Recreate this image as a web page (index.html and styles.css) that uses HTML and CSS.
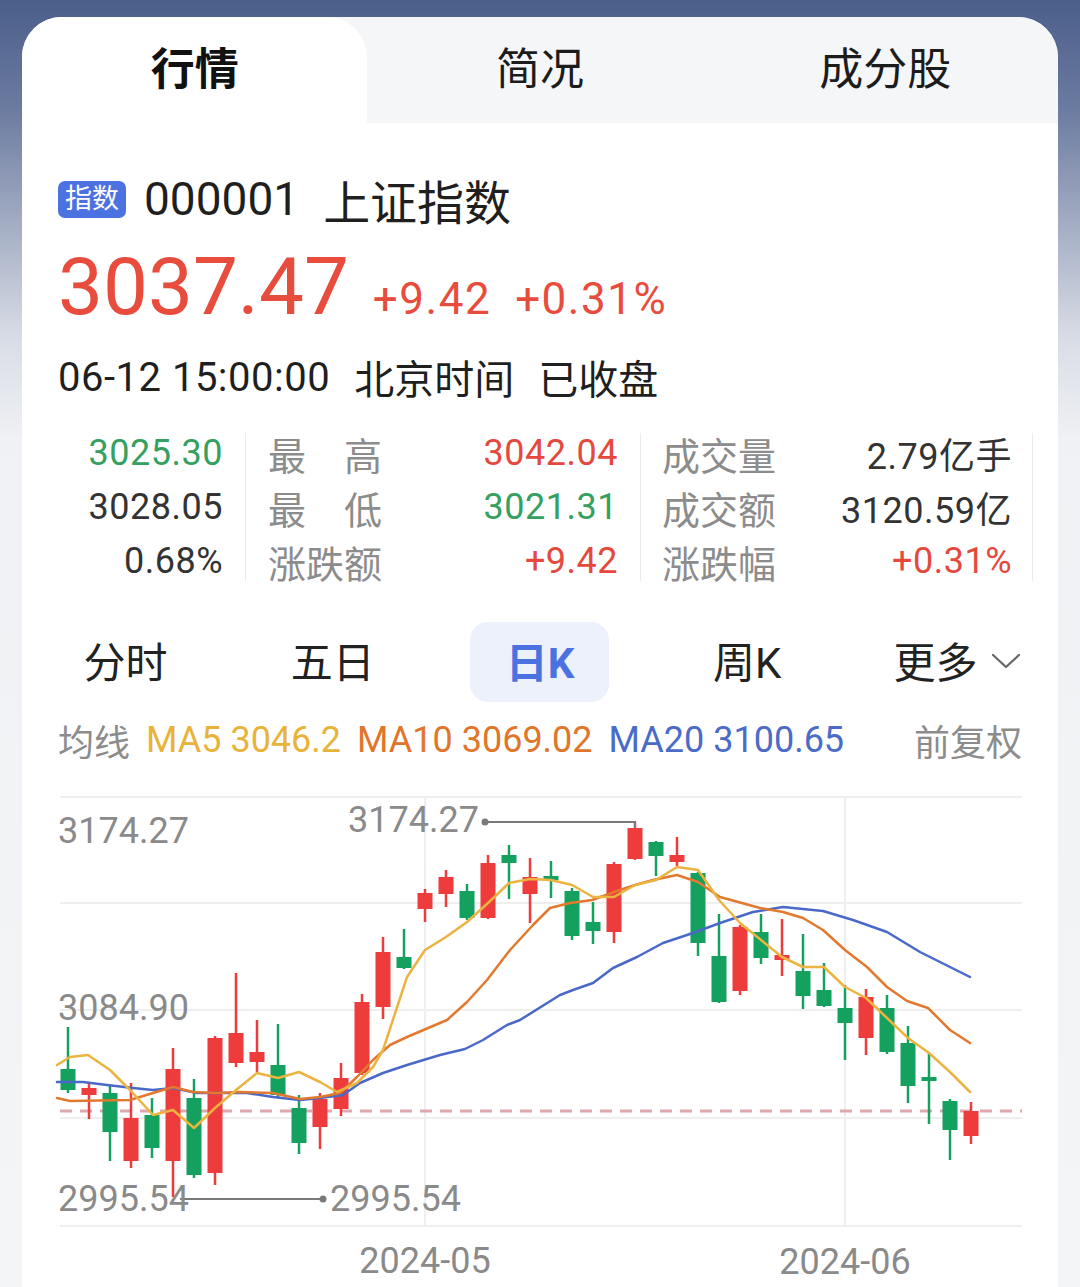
FILE: index.html
```html
<!DOCTYPE html>
<html lang="zh-CN">
<head>
<meta charset="utf-8">
<title>上证指数 行情</title>
<link rel="stylesheet" href="styles.css">
</head>
<body>
<div class="card">
  <div class="tabs">
    <div class="tab active">行情</div>
    <div class="tab">简况</div>
    <div class="tab">成分股</div>
  </div>

  <div class="head">
    <div class="title">
      <span class="badge">指数</span>
      <span class="code">000001</span>
      <span class="name">上证指数</span>
    </div>
    <div class="price">
      <span class="big">3037.47</span>
      <span class="chg">+9.42</span>
      <span class="chg">+0.31%</span>
    </div>
    <div class="time">
      <span class="ts">06-12 15:00:00</span>
      <span>北京时间</span>
      <span>已收盘</span>
    </div>
  </div>

  <div class="stats">
    <div class="col c1">
      <div class="row"><span class="v green">3025.30</span></div>
      <div class="row"><span class="v">3028.05</span></div>
      <div class="row"><span class="v">0.68%</span></div>
    </div>
    <div class="divider"></div>
    <div class="col c2">
      <div class="row"><span class="l">最　高</span><span class="v red">3042.04</span></div>
      <div class="row"><span class="l">最　低</span><span class="v green">3021.31</span></div>
      <div class="row"><span class="l">涨跌额</span><span class="v red">+9.42</span></div>
    </div>
    <div class="divider"></div>
    <div class="col c3">
      <div class="row"><span class="l">成交量</span><span class="v">2.79亿手</span></div>
      <div class="row"><span class="l">成交额</span><span class="v">3120.59亿</span></div>
      <div class="row"><span class="l">涨跌幅</span><span class="v red">+0.31%</span></div>
    </div>
    <div class="divider"></div>
  </div>

  <div class="periods">
    <div class="period">分时</div>
    <div class="period">五日</div>
    <div class="period active"><span class="pill">日K</span></div>
    <div class="period">周K</div>
    <div class="period more">更多<svg class="chev" width="30" height="18" viewBox="0 0 30 18"><polyline points="2,3 15,15 28,3" fill="none" stroke="#666" stroke-width="2.2" stroke-linecap="round" stroke-linejoin="round"/></svg></div>
  </div>

  <div class="ma">
    <span class="gray">均线</span>
    <span class="ma5">MA5 3046.2</span>
    <span class="ma10">MA10 3069.02</span>
    <span class="ma20">MA20 3100.65</span>
    <span class="gray right">前复权</span>
  </div>

  <svg class="chart" width="1036" height="522" viewBox="22 765 1036 522">
    <g class="grid">
      <line x1="60" y1="797" x2="1022" y2="797"/>
      <line x1="60" y1="903" x2="1022" y2="903"/>
      <line x1="60" y1="1010" x2="1022" y2="1010"/>
      <line x1="60" y1="1118" x2="1022" y2="1118"/>
      <line x1="60" y1="1226" x2="1022" y2="1226"/>
      <line x1="425" y1="797" x2="425" y2="1226"/>
      <line x1="845" y1="797" x2="845" y2="1226"/>
    </g>
    <line class="prev" x1="60" y1="1111" x2="1022" y2="1111"/>

    <g class="up">
      <line x1="89" y1="1082" x2="89" y2="1119"/><rect x="81.5" y="1088" width="15" height="7"/>
      <line x1="131" y1="1083" x2="131" y2="1168"/><rect x="123.5" y="1118" width="15" height="43"/>
      <line x1="173" y1="1048" x2="173" y2="1197"/><rect x="165.5" y="1069" width="15" height="92"/>
      <line x1="215" y1="1036" x2="215" y2="1185"/><rect x="207.5" y="1038" width="15" height="135"/>
      <line x1="236" y1="973" x2="236" y2="1067"/><rect x="228.5" y="1033" width="15" height="30"/>
      <line x1="257" y1="1020" x2="257" y2="1072"/><rect x="249.5" y="1052" width="15" height="10"/>
      <line x1="320" y1="1093" x2="320" y2="1149"/><rect x="312.5" y="1099" width="15" height="28"/>
      <line x1="341" y1="1063" x2="341" y2="1116"/><rect x="333.5" y="1078" width="15" height="31"/>
      <line x1="362" y1="994" x2="362" y2="1075"/><rect x="354.5" y="1002" width="15" height="71"/>
      <line x1="383" y1="937" x2="383" y2="1019"/><rect x="375.5" y="952" width="15" height="55"/>
      <line x1="425" y1="889" x2="425" y2="922"/><rect x="417.5" y="893" width="15" height="16"/>
      <line x1="446" y1="870" x2="446" y2="907"/><rect x="438.5" y="877" width="15" height="17"/>
      <line x1="488" y1="855" x2="488" y2="919"/><rect x="480.5" y="863" width="15" height="55"/>
      <line x1="530" y1="858" x2="530" y2="923"/><rect x="522.5" y="877" width="15" height="17"/>
      <line x1="614" y1="862" x2="614" y2="943"/><rect x="606.5" y="864" width="15" height="68"/>
      <line x1="635" y1="822" x2="635" y2="860"/><rect x="627.5" y="828" width="15" height="31"/>
      <line x1="677" y1="837" x2="677" y2="866"/><rect x="669.5" y="855" width="15" height="7"/>
      <line x1="740" y1="925" x2="740" y2="995"/><rect x="732.5" y="927" width="15" height="64"/>
      <line x1="782" y1="919" x2="782" y2="976"/><rect x="774.5" y="955" width="15" height="5"/>
      <line x1="866" y1="989" x2="866" y2="1055"/><rect x="858.5" y="997" width="15" height="41"/>
      <line x1="971" y1="1102" x2="971" y2="1144"/><rect x="963.5" y="1111" width="15" height="25"/>
    </g>
    <g class="down">
      <line x1="68" y1="1027" x2="68" y2="1093"/><rect x="60.5" y="1069" width="15" height="21"/>
      <line x1="110" y1="1085" x2="110" y2="1161"/><rect x="102.5" y="1093" width="15" height="39"/>
      <line x1="152" y1="1098" x2="152" y2="1158"/><rect x="144.5" y="1115" width="15" height="33"/>
      <line x1="194" y1="1079" x2="194" y2="1178"/><rect x="186.5" y="1098" width="15" height="77"/>
      <line x1="278" y1="1024" x2="278" y2="1097"/><rect x="270.5" y="1065" width="15" height="30"/>
      <line x1="299" y1="1095" x2="299" y2="1154"/><rect x="291.5" y="1108" width="15" height="35"/>
      <line x1="404" y1="929" x2="404" y2="969"/><rect x="396.5" y="957" width="15" height="11"/>
      <line x1="467" y1="884" x2="467" y2="920"/><rect x="459.5" y="891" width="15" height="27"/>
      <line x1="509" y1="845" x2="509" y2="899"/><rect x="501.5" y="855" width="15" height="8"/>
      <line x1="551" y1="861" x2="551" y2="898"/><rect x="543.5" y="876" width="15" height="4"/>
      <line x1="572" y1="888" x2="572" y2="940"/><rect x="564.5" y="891" width="15" height="45"/>
      <line x1="593" y1="902" x2="593" y2="944"/><rect x="585.5" y="922" width="15" height="9"/>
      <line x1="656" y1="841" x2="656" y2="876"/><rect x="648.5" y="842" width="15" height="14"/>
      <line x1="698" y1="872" x2="698" y2="956"/><rect x="690.5" y="873" width="15" height="70"/>
      <line x1="719" y1="914" x2="719" y2="1003"/><rect x="711.5" y="956" width="15" height="46"/>
      <line x1="761" y1="914" x2="761" y2="964"/><rect x="753.5" y="932" width="15" height="26"/>
      <line x1="803" y1="934" x2="803" y2="1009"/><rect x="795.5" y="971" width="15" height="25"/>
      <line x1="824" y1="963" x2="824" y2="1007"/><rect x="816.5" y="990" width="15" height="16"/>
      <line x1="845" y1="985" x2="845" y2="1060"/><rect x="837.5" y="1008" width="15" height="15"/>
      <line x1="887" y1="995" x2="887" y2="1054"/><rect x="879.5" y="1008" width="15" height="44"/>
      <line x1="908" y1="1026" x2="908" y2="1103"/><rect x="900.5" y="1043" width="15" height="43"/>
      <line x1="929" y1="1053" x2="929" y2="1124"/><rect x="921.5" y="1077" width="15" height="4"/>
      <line x1="950" y1="1099" x2="950" y2="1160"/><rect x="942.5" y="1101" width="15" height="29"/>
    </g>

    <polyline class="l20" points="57,1082 83,1082 107,1085 133,1088 153,1090 173,1088 197,1093 220,1093 247,1093 273,1097 300,1100 320,1098 343,1095 360,1083 383,1073 407,1065 440,1055 465,1049 483,1040 507,1025 520,1020 560,995 573,990 593,983 613,968 637,957 663,943 693,933 720,923 753,912 783,907 823,911 853,920 887,932 920,952 970,977"/>
    <polyline class="l10" points="57,1098 70,1101 130,1100 153,1093 173,1087 193,1092 217,1093 240,1092 273,1093 300,1099 320,1097 340,1093 357,1077 373,1060 390,1045 407,1037 447,1020 467,1002 487,980 510,950 533,925 550,908 570,903 592,900 620,890 635,885 653,880 677,875 698,882 720,897 760,908 783,912 803,918 823,930 845,950 867,967 887,987 907,1001 928,1008 950,1030 970,1043"/>
    <polyline class="l5" points="57,1065 70,1057 88,1055 110,1070 130,1090 153,1115 173,1110 194,1128 215,1108 236,1090 257,1073 278,1078 299,1072 320,1082 337,1092 357,1083 373,1067 383,1050 407,977 425,950 446,937 467,922 488,903 509,883 530,879 551,880 572,885 593,897 614,897 635,885 656,880 677,867 698,870 719,900 740,923 761,940 782,957 803,967 824,967 845,987 866,998 887,1018 908,1038 929,1053 950,1072 970,1092"/>

    <g class="marker">
      <polyline points="485,822 635,822 635,828"/>
      <circle cx="485" cy="822" r="3.5"/>
      <line x1="180" y1="1199" x2="323" y2="1199"/>
      <circle cx="323" cy="1199" r="3.5"/>
    </g>

    <text class="axis" x="58" y="843">3174.27</text>
    <text class="axis" x="58" y="1020">3084.90</text>
    <text class="axis" x="58" y="1211">2995.54</text>
    <text class="axis" x="348" y="832">3174.27</text>
    <text class="axis" x="330" y="1211">2995.54</text>
    <text class="axis mid" x="425" y="1273">2024-05</text>
    <text class="axis mid" x="845" y="1274">2024-06</text>
  </svg>
</div>
</body>
</html>
```

FILE: styles.css
```css
* {
  box-sizing: border-box;
  margin: 0;
  padding: 0;
}

html,
body {
  height: 1287px;
  overflow: hidden;
}

body {
  font-family: Roboto, "Noto Sans CJK SC", sans-serif;
  background: linear-gradient(180deg, #4b5f8b 0px, #6c7ba0 110px, #a6b0c5 230px, #d9dde6 340px, #eff1f4 440px, #f4f5f7 100%);
  padding: 0 22px;
  color: #222;
}

.card {
  margin-top: 17px;
  background: #fff;
  border-radius: 40px 40px 0 0;
  overflow: hidden;
  height: 1270px;
}

/* top tabs */
.tabs {
  display: grid;
  grid-template-columns: repeat(3, 1fr);
  height: 106px;
  background: #f5f6f8;
}

.tab {
  display: flex;
  align-items: center;
  justify-content: center;
  font-size: 44px;
  padding-bottom: 8px;
  color: #1c1c1c;
}

.tab.active {
  background: #fff;
  border-radius: 0 40px 0 0;
  font-weight: 700;
  color: #111;
}

/* header */
.head {
  padding: 0 36px;
}

.title {
  display: flex;
  align-items: center;
  height: 60px;
  margin-top: 46px;
  font-size: 46px;
  color: #1f1f1f;
}

.badge {
  background: #4c72e2;
  color: #fff;
  font-size: 27px;
  height: 37px;
  line-height: 37px;
  padding: 0 7px;
  border-radius: 7px;
  margin-right: 18px;
}

.code {
  margin-right: 24px;
}

.name {
  font-size: 47px;
}

.price {
  display: flex;
  align-items: baseline;
  height: 80px;
  line-height: 80px;
  margin-top: 18px;
  color: #e84c3d;
}

.price .big {
  font-size: 80px;
}

.price .chg {
  font-size: 44px;
  margin-left: 24px;
  letter-spacing: 1.5px;
}

.time {
  display: flex;
  align-items: center;
  gap: 24px;
  height: 50px;
  margin-top: 25px;
  font-size: 40px;
  color: #1f1f1f;
}

.time .ts {
  letter-spacing: 0.5px;
}

/* stats */
.stats {
  display: grid;
  grid-template-columns: 223px 1px 394px 1px 391px 1px;
  align-items: center;
  margin-top: 24px;
  height: 162px;
  font-size: 36px;
}

.divider {
  height: 148px;
  background: #ebebeb;
}

.row {
  display: flex;
  align-items: center;
  justify-content: space-between;
  height: 54px;
}

.c1 {
  padding-right: 22px;
}

.c1 .row {
  justify-content: flex-end;
}

.c2 {
  padding: 0 22px;
}

.c3 {
  padding: 0 20px 0 21px;
}

.l {
  color: #8c8c8c;
  font-size: 38px;
}

.v {
  color: #333;
  letter-spacing: 0.5px;
}

.v.green {
  color: #35a061;
}

.v.red {
  color: #e5493d;
}

/* periods */
.periods {
  display: grid;
  grid-template-columns: repeat(5, 1fr);
  height: 80px;
  margin-top: 34px;
}

.period {
  display: flex;
  align-items: center;
  justify-content: center;
  font-size: 42px;
  color: #222;
  padding-bottom: 6px;
}

.period.active {
  padding-bottom: 0;
}

.pill {
  display: flex;
  align-items: center;
  justify-content: center;
  width: 139px;
  height: 80px;
  padding-bottom: 6px;
  border-radius: 18px;
  background: #edf1fc;
  color: #4a72e0;
  font-weight: 700;
}

.more {
  padding-left: 6px;
}

.more .chev {
  margin-left: 14px;
  margin-top: 4px;
}

/* MA legend */
.ma {
  display: flex;
  align-items: center;
  gap: 16px;
  height: 50px;
  margin-top: 13px;
  padding: 0 36px;
  font-size: 36px;
}

.gray {
  color: #8c8c8c;
}

.ma5 {
  color: #e8b33a;
}

.ma10 {
  color: #e0762b;
}

.ma20 {
  color: #4a6cc8;
}

.right {
  margin-left: auto;
}

/* chart */
.chart {
  display: block;
}

.grid line {
  stroke: #efefef;
  stroke-width: 2;
}

.prev {
  stroke: #e0a8ae;
  stroke-width: 3;
  stroke-dasharray: 12 8;
}

.up line {
  stroke: #ee3b3b;
  stroke-width: 2.5;
}

.up rect {
  fill: #ee3b3b;
}

.down line {
  stroke: #14a05e;
  stroke-width: 2.5;
}

.down rect {
  fill: #14a05e;
}

.l5,
.l10,
.l20 {
  fill: none;
  stroke-width: 2.5;
  stroke-linejoin: round;
  stroke-linecap: round;
}

.l5 {
  stroke: #ebb340;
}

.l10 {
  stroke: #e2792e;
}

.l20 {
  stroke: #4a68c8;
}

.marker polyline,
.marker line {
  fill: none;
  stroke: #7a7a7a;
  stroke-width: 2;
}

.marker circle {
  fill: #7a7a7a;
}

.axis {
  font-family: Roboto, "Noto Sans CJK SC", sans-serif;
  font-size: 36px;
  fill: #8a8a8a;
}

.axis.mid {
  text-anchor: middle;
}
```
